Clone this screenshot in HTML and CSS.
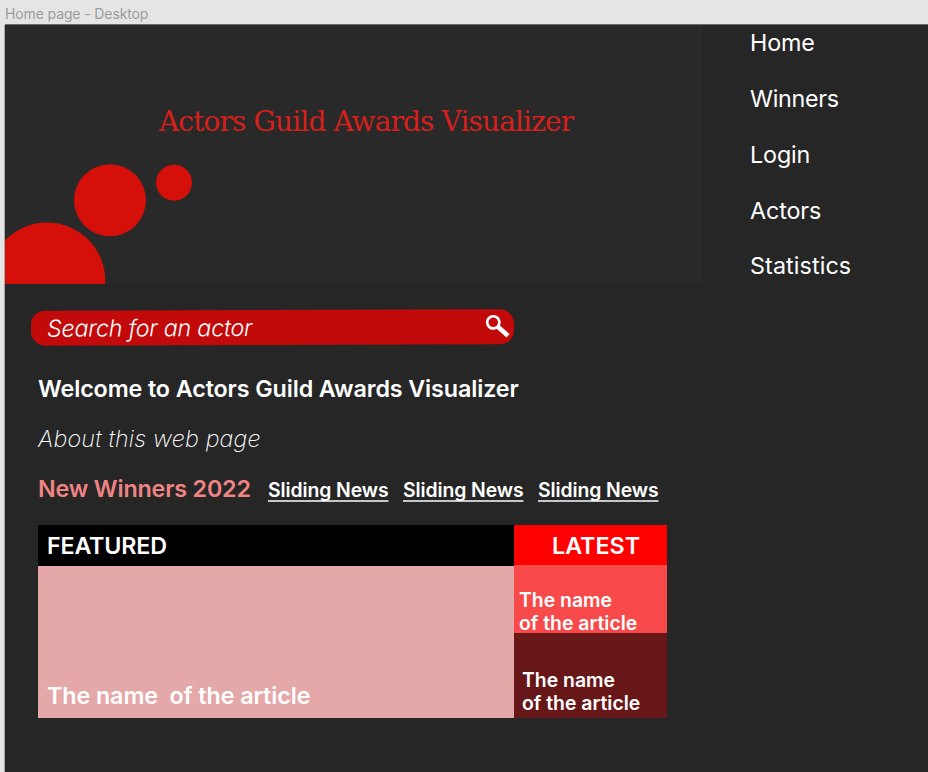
FILE: index.html
```html
<!DOCTYPE html>
<html lang="en">
<head>
<meta charset="utf-8">
<title>Actors Guild Awards Visualizer</title>
<link rel="stylesheet" href="styles.css">
</head>
<body>
<div class="frame-label">Home page - Desktop</div>
<div class="frame">
  <header class="top">
    <div class="banner">
      <svg class="circles" width="200" height="124" viewBox="0 0 200 124" aria-hidden="true">
        <circle cx="42" cy="120.8" r="58.3"/>
        <circle cx="105" cy="40.3" r="36"/>
        <circle cx="169" cy="22.7" r="18"/>
      </svg>
      <h1 class="brand">Actors Guild Awards Visualizer</h1>
    </div>
    <nav class="nav">
      <a>Home</a>
      <a class="tight">Winners</a>
      <a>Login</a>
      <a>Actors</a>
      <a class="wide">Statistics</a>
    </nav>
  </header>
  <main class="content">
    <div class="search">
      <span class="search-text">Search for an actor</span>
      <svg class="search-icon" width="25" height="24" viewBox="0 0 25 24" aria-hidden="true">
        <circle cx="8.3" cy="8" r="6.1" fill="none" stroke="#fff" stroke-width="2.7"/>
        <path d="M12.3 12L23 21.5" fill="none" stroke="#fff" stroke-width="4.6"/>
      </svg>
    </div>
    <h2 class="welcome">Welcome to Actors Guild Awards Visualizer</h2>
    <p class="about">About this web page</p>
    <div class="news">
      <h3 class="news-title">New Winners 2022</h3>
      <a class="news-link">Sliding News</a>
      <a class="news-link">Sliding News</a>
      <a class="news-link">Sliding News</a>
    </div>
    <div class="articles">
      <section class="featured">
        <h3 class="featured-head">FEATURED</h3>
        <div class="featured-body">The name&nbsp; of the article</div>
      </section>
      <section class="latest">
        <h3 class="latest-head">LATEST</h3>
        <div class="latest-first">The name<br>of the article</div>
        <div class="latest-second">The name<br>of the article</div>
      </section>
    </div>
  </main>
</div>
</body>
</html>
```

FILE: styles.css
```css
* { box-sizing: border-box; }
body {
  margin: 0;
  height: 772px;
  overflow: hidden;
  padding-left: 5px;
  background: #e5e5e5;
  font-family: Inter, sans-serif;
  color: #fff;
}
h1, h2, h3, p { margin: 0; font-weight: 600; }
.frame-label {
  height: 25px;
  padding-top: 5px;
  font-size: 14px;
  line-height: 18px;
  letter-spacing: -0.12px;
  color: #9b9b9b;
}
.frame {
  height: 748px;
  background: #262626;
  box-shadow: 0 -1px 0 #6b6b6b, -1px 0 0 #a8a8a8;
}
.top { display: flex; height: 259px; }
.banner {
  position: relative;
  width: 697px;
  background: #292929;
  overflow: hidden;
}
.circles {
  position: absolute;
  left: 0;
  bottom: 0;
  fill: #d5100a;
}
.brand {
  padding: 79px 0 0 154px;
  font-family: "Roboto Slab", "DejaVu Serif", serif;
  font-size: 28px;
  line-height: 36px;
  font-weight: 400;
  letter-spacing: -0.87px;
  color: #d71f1b;
  white-space: nowrap;
}
.nav {
  display: flex;
  flex-direction: column;
  gap: 27.85px;
  padding: 4px 0 0 48px;
  font-size: 23.3px;
  line-height: 28px;
  letter-spacing: -0.12px;
}
.nav .tight { letter-spacing: -0.3px; }
.nav .wide { letter-spacing: 0.1px; }
.content { padding: 26px 0 0 33px; }
.search {
  display: flex;
  justify-content: space-between;
  width: 483px;
  height: 35px;
  margin-left: -7px;
  padding: 4px 4px 0 16px;
  border-radius: 14px;
  background: #c20a0a;
  transform: rotate(-0.17deg);
}
.search-icon { margin-top: 1px; }
.search-text {
  font-size: 23.3px;
  line-height: 28px;
  font-style: italic;
  font-weight: 300;
  letter-spacing: -0.25px;
}
.welcome {
  margin-top: 30px;
  font-size: 23.3px;
  line-height: 28px;
  letter-spacing: -0.11px;
}
.about {
  margin-top: 22px;
  font-size: 23.3px;
  line-height: 28px;
  font-style: italic;
  font-weight: 200;
  letter-spacing: 0.2px;
}
.news {
  display: flex;
  align-items: baseline;
  height: 28px;
  margin-top: 22px;
}
.news-title {
  width: 230px;
  font-size: 23.3px;
  line-height: 28px;
  letter-spacing: -0.17px;
  color: #f08484;
}
.news-link {
  width: 135px;
  font-size: 19.4px;
  line-height: 24px;
  font-weight: 600;
  letter-spacing: -0.1px;
  text-decoration: underline;
  text-decoration-color: #c4c8c8;
  text-decoration-thickness: 2px;
  text-decoration-skip-ink: none;
  text-underline-offset: 3px;
}
.articles {
  display: flex;
  width: 629px;
  height: 193px;
  margin-top: 22px;
}
.featured { display: flex; flex-direction: column; width: 476px; }
.featured-head {
  height: 41px;
  padding: 7px 9px 0;
  background: #000;
  font-size: 23.3px;
  line-height: 28px;
  letter-spacing: -0.2px;
}
.featured-body {
  flex: 1;
  display: flex;
  align-items: flex-end;
  padding: 0 9px 8px;
  background: #e4a8a8;
  font-size: 23.3px;
  line-height: 28px;
  font-weight: 600;
  letter-spacing: -0.09px;
}
.latest { display: flex; flex-direction: column; width: 153px; }
.latest-head {
  height: 40px;
  padding: 7px 0 0 38px;
  background: #f00;
  font-size: 23.3px;
  line-height: 28px;
}
.latest-first, .latest-second {
  font-size: 19.4px;
  line-height: 23.3px;
  font-weight: 600;
}
.latest-first {
  height: 68px;
  padding: 24px 0 0 5px;
  background: #f84a4a;
}
.latest-second {
  height: 85px;
  padding: 36px 0 0 8px;
  background: #671718;
}
```
